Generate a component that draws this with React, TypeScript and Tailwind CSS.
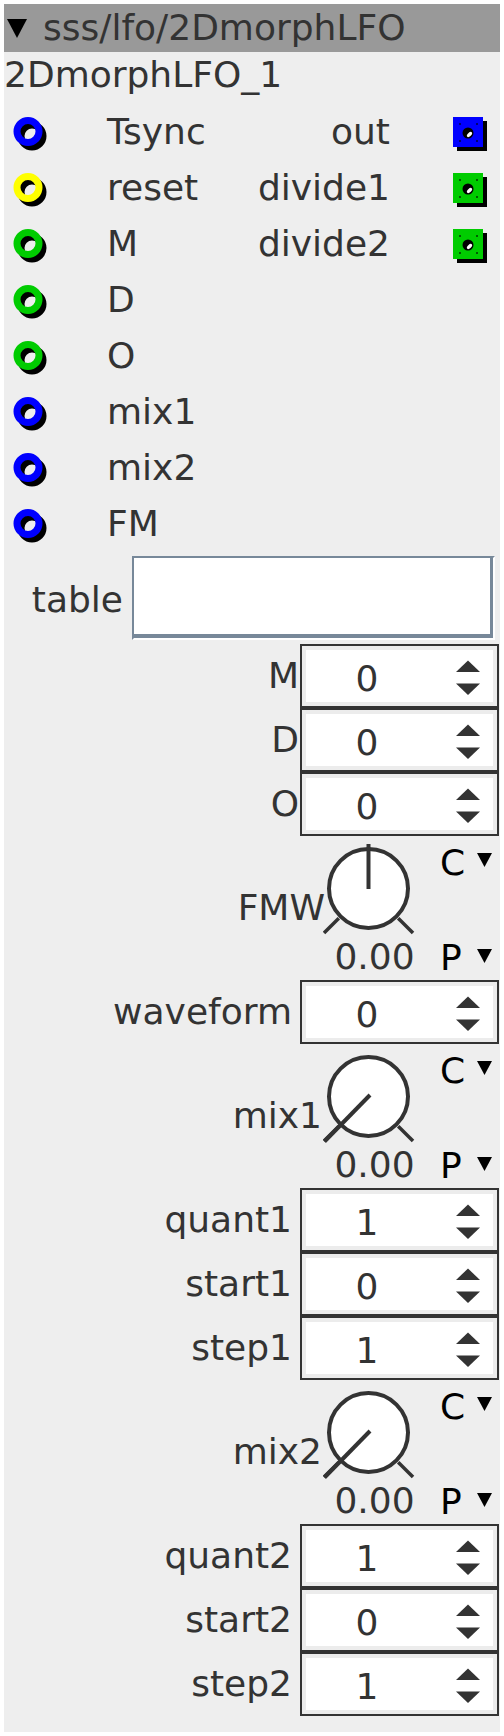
import React from "react";

const FONT = "font-['DejaVu_Sans','Liberation_Sans',sans-serif]";

function Inlet({ color }: { color: string }) {
  return (
    <svg width="40" height="40" viewBox="0 0 40 40" className="block shrink-0">
      <circle cx="23" cy="24" r="11" fill="none" stroke="#000" strokeWidth="7" />
      <circle cx="19" cy="19.5" r="11" fill="none" stroke={color} strokeWidth="7" />
    </svg>
  );
}

function Outlet({ color }: { color: string }) {
  return (
    <svg width="40" height="40" viewBox="0 0 40 40" className="block shrink-0">
      <rect x="8" y="9" width="30" height="30" fill="#000" />
      <rect x="4" y="5" width="30" height="30" fill={color} />
      <rect x="10" y="11" width="2" height="2" fill="#000" opacity="0.55" />
      <rect x="27" y="11" width="2" height="2" fill="#000" opacity="0.55" />
      <rect x="10" y="28" width="2" height="2" fill="#000" opacity="0.55" />
      <rect x="27" y="28" width="2" height="2" fill="#000" opacity="0.55" />
      <circle cx="19" cy="21" r="5.5" fill="#000" />
      <ellipse cx="20.5" cy="22.5" rx="3.2" ry="1.7" transform="rotate(-45 20.5 22.5)" fill="#fff" />
    </svg>
  );
}

function IORow({
  inColor,
  inLabel,
  outLabel,
  outColor,
}: {
  inColor: string;
  inLabel: string;
  outLabel?: string;
  outColor?: string;
}) {
  return (
    <div className="flex h-[56px] items-center">
      <div className="ml-[5px] w-[40px]">
        <Inlet color={inColor} />
      </div>
      <div className="ml-[58px] flex-1 leading-[56px]">{inLabel}</div>
      <div className="text-right leading-[56px]">{outLabel ?? ""}</div>
      <div className="ml-[59px] mr-[11px] w-[40px]">{outColor ? <Outlet color={outColor} /> : null}</div>
    </div>
  );
}

function Arrows() {
  return (
    <svg width="24" height="52" viewBox="0 0 24 52" className="ml-[28px] block shrink-0">
      <polygon points="12,10.5 24,22 0,22" fill="#333" />
      <polygon points="0,33.5 24,33.5 12,45" fill="#333" />
    </svg>
  );
}

function NumRow({ label, value, tight }: { label: string; value: string; tight?: boolean }) {
  return (
    <div className="flex h-[64px] items-center justify-end pr-[1px]">
      <span className={tight ? "mr-[1px] leading-[64px]" : "mr-[8px] leading-[64px]"}>{label}</span>
      <div className="h-[64px] w-[199px] border-2 border-[#333333] bg-white">
        <div className="flex h-full border-4 border-[#ececec]">
          <div className="w-[122px] pt-[6px] text-center leading-[46px]">{value}</div>
          <Arrows />
        </div>
      </div>
    </div>
  );
}

function SmallTri() {
  return (
    <svg width="15" height="14" viewBox="0 0 15 14" className="block shrink-0">
      <polygon points="0,0 15,0 7.5,14" fill="#000" />
    </svg>
  );
}

function Knob({ label, bipolar }: { label: string; bipolar?: boolean }) {
  return (
    <div className="flex h-[144px] justify-end">
      <div className={bipolar ? "mr-[-2px] mt-[51px] leading-[42px]" : "mr-[1px] mt-[51px] leading-[42px]"}>{label}</div>
      <div className="flex w-[103px] flex-col items-center">
        <svg width="103" height="100" viewBox="0 0 103 100" className="block">
          <circle cx="45.5" cy="52.5" r="39.5" fill="#fff" stroke="#333" strokeWidth="4" />
          <line x1="15.8" y1="82.2" x2="1" y2="97" stroke="#333" strokeWidth="3.5" />
          <line x1="75.2" y1="82.2" x2="90" y2="97" stroke="#333" strokeWidth="3.5" />
          {bipolar ? (
            <line x1="45.5" y1="53" x2="45.5" y2="8" stroke="#333" strokeWidth="4" />
          ) : (
            <line x1="47" y1="51" x2="1.5" y2="97.5" stroke="#333" strokeWidth="4" />
          )}
        </svg>
        <div className="leading-[42px]">0.00</div>
      </div>
      <div className="w-[74px] pl-[14px] text-black">
        <div className="mt-[6px] flex h-[42px]">
          <span className="w-[37px] leading-[42px]">C</span>
          <div className="mt-[11px]">
            <SmallTri />
          </div>
        </div>
        <div className="mt-[53px] flex h-[42px]">
          <span className="w-[37px] leading-[42px]">P</span>
          <div className="mt-[12px]">
            <SmallTri />
          </div>
        </div>
      </div>
    </div>
  );
}

export default function App() {
  return (
    <div className="min-h-screen bg-white p-[4px]">
      <div className={`w-[496px] bg-[#eeeeee] pb-[16px] text-[36px] text-[#333333] ${FONT}`}>
        <div className="flex h-[48px] items-start bg-[#999999] pl-[3px]">
          <svg width="20" height="19" viewBox="0 0 20 19" className="mt-[15px] block shrink-0">
            <polygon points="0,0 20,0 10,19" fill="#000" />
          </svg>
          <span className="ml-[16px] leading-[48px]">sss/lfo/2DmorphLFO</span>
        </div>
        <div className="pb-[6px] leading-[46px]">2DmorphLFO_1</div>

        <IORow inColor="#0000ff" inLabel="Tsync" outLabel="out" outColor="#0000ff" />
        <IORow inColor="#ffff00" inLabel="reset" outLabel="divide1" outColor="#00cc00" />
        <IORow inColor="#00cc00" inLabel="M" outLabel="divide2" outColor="#00cc00" />
        <IORow inColor="#00cc00" inLabel="D" />
        <IORow inColor="#00cc00" inLabel="O" />
        <IORow inColor="#0000ff" inLabel="mix1" />
        <IORow inColor="#0000ff" inLabel="mix2" />
        <IORow inColor="#0000ff" inLabel="FM" />

        <div className="flex items-center justify-end gap-[9px] py-[4px] pr-[5px]">
          <span className="mt-[3px] leading-[42px]">table</span>
          <div className="h-[84px] w-[363px] border-2 border-b-white border-l-[#778899] border-r-white border-t-[#778899]">
            <div className="h-full w-full border-b-[4px] border-r-[3px] border-[#778899] bg-white"></div>
          </div>
        </div>

        <NumRow label="M" value="0" tight />
        <NumRow label="D" value="0" tight />
        <NumRow label="O" value="0" tight />
        <Knob label="FMW" bipolar />
        <NumRow label="waveform" value="0" />
        <Knob label="mix1" />
        <NumRow label="quant1" value="1" />
        <NumRow label="start1" value="0" />
        <NumRow label="step1" value="1" />
        <Knob label="mix2" />
        <NumRow label="quant2" value="1" />
        <NumRow label="start2" value="0" />
        <NumRow label="step2" value="1" />
      </div>
    </div>
  );
}
